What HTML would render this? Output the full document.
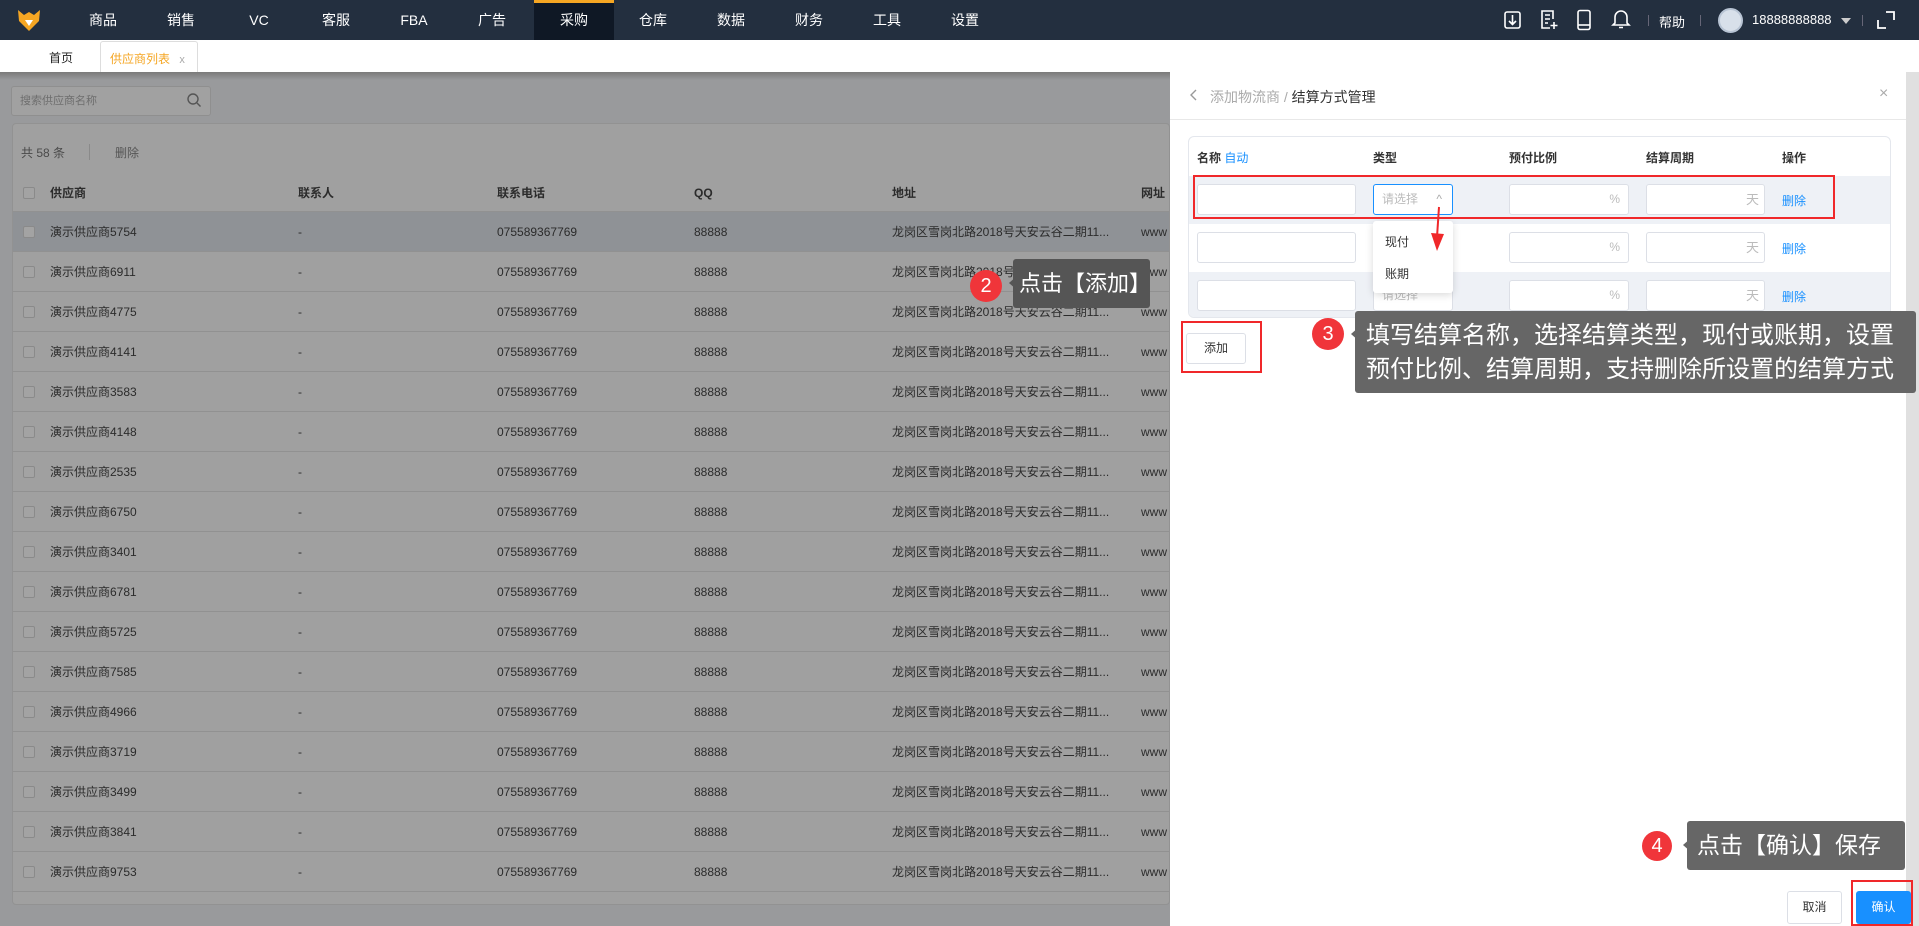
<!DOCTYPE html>
<html><head><meta charset="utf-8"><style>
*{margin:0;padding:0;box-sizing:border-box}
body{width:1919px;height:926px;overflow:hidden;position:relative;font-family:"Liberation Sans","Noto Sans CJK SC",sans-serif;font-size:12px;color:#333;background:#fff}
.a{position:absolute}
.nav{left:0;top:0;width:1919px;height:40px;background:#232f3f}
.ni{position:absolute;top:0;height:40px;line-height:40px;color:#fff;font-size:14px;text-align:center;width:78px}
.ov{left:0;top:72px;width:1170px;height:854px;background:#999a9c}
.card{left:12px;top:123px;width:1158px;height:782px;background:#a0a0a0;border-radius:4px;border:1px solid #929292;overflow:hidden}
.row{position:absolute;left:0;width:1158px;height:40px;border-bottom:1px solid #919191}
.c{position:absolute;top:0;line-height:40px;color:#2b2b2b;font-size:12px;white-space:nowrap}
.cb{position:absolute;left:10px;top:14px;width:12px;height:12px;border:1px solid #8a8a8a;border-radius:2px;background:#a3a3a3}
.drawer{left:1170px;top:72px;width:736px;height:854px;background:#fff}
.inp{position:absolute;height:31px;border:1px solid #dcdfe6;border-radius:3px;background:#fff;color:#bbb;font-size:12px;line-height:29px}
.red{position:absolute;border:2px solid #f0282a}
.tip{position:absolute;background:#666;color:#fff;border-radius:3px;white-space:nowrap}
.badge{position:absolute;border-radius:50%;background:#f0353a;color:#fff;text-align:center}
</style></head><body>
<div class="a nav">
  <svg class="a" style="left:17px;top:8px" width="24" height="24" viewBox="0 0 24 24"><path d="M1 2 L7 7 L12 4 L17 7 L23 2 L22 13 L12 23 L2 13Z" fill="#f5a623"/><path d="M8 12 L16 12 L12 18Z" fill="#fff"/></svg>
  <div class="ni" style="left:64px">商品</div><div class="ni" style="left:142px">销售</div><div class="ni" style="left:220px">VC</div><div class="ni" style="left:297px">客服</div><div class="ni" style="left:375px">FBA</div><div class="ni" style="left:453px">广告</div>
  <div class="ni" style="left:534px;width:80px;background:#0f1825">采购</div><div class="a" style="left:534px;top:0;width:80px;height:3px;background:#f5a623"></div>
  <div class="ni" style="left:614px">仓库</div><div class="ni" style="left:692px">数据</div><div class="ni" style="left:770px">财务</div><div class="ni" style="left:848px">工具</div><div class="ni" style="left:926px">设置</div>
  <svg class="a" style="left:1503px;top:10px" width="20" height="20" viewBox="0 0 20 20" fill="none" stroke="#fff" stroke-width="1.6"><rect x="2" y="2" width="15" height="16" rx="2"/><path d="M9.5 5v9M6 11l3.5 3.5L13 11"/></svg>
  <svg class="a" style="left:1539px;top:9px" width="20" height="22" viewBox="0 0 20 22" fill="none" stroke="#fff" stroke-width="1.6"><path d="M14 10V2H3v17h8M6 6h5M6 10h5M6 14h3M15 13v7M11.5 16.5h7"/></svg>
  <svg class="a" style="left:1576px;top:9px" width="16" height="22" viewBox="0 0 16 22" fill="none" stroke="#fff" stroke-width="1.6"><rect x="2" y="1.5" width="12" height="19" rx="2"/><path d="M2 16h12"/></svg>
  <svg class="a" style="left:1611px;top:8px" width="20" height="22" viewBox="0 0 20 22" fill="none" stroke="#fff" stroke-width="1.6"><path d="M10 3a6 6 0 0 1 6 6v6l2 2H2l2-2V9a6 6 0 0 1 6-6zM8 19.5h4"/></svg>
  <div class="a" style="left:1648px;top:15px;width:1px;height:11px;background:#667"></div>
  <div class="a" style="left:1659px;top:12px;color:#fff;font-size:13px">帮助</div>
  <div class="a" style="left:1700px;top:15px;width:1px;height:11px;background:#667"></div>
  <div class="a" style="left:1718px;top:8px;width:25px;height:25px;border-radius:50%;background:#d8e0ea;border:2px solid #b8c4d4"></div>
  <div class="a" style="left:1752px;top:12px;color:#fff;font-size:13px">18888888888</div>
  <div class="a" style="left:1841px;top:18px;border:5px solid transparent;border-top:6px solid #ccc"></div>
  <div class="a" style="left:1862px;top:15px;width:1px;height:11px;background:#667"></div>
  <svg class="a" style="left:1877px;top:11px" width="18" height="18" viewBox="0 0 18 18" fill="none" stroke="#fff" stroke-width="1.8"><path d="M1 9v8h8M9 1h8v8"/></svg>
</div>
<div class="a" style="left:0;top:40px;width:1919px;height:32px;background:#fff"></div>
<div class="a" style="left:49px;top:49px;font-size:12px;color:#222">首页</div>
<div class="a" style="left:100px;top:41px;width:98px;height:31px;border:1px solid #ddd;border-bottom:none;border-radius:3px 3px 0 0"></div>
<div class="a" style="left:110px;top:50px;font-size:12px;color:#f5a623">供应商列表 <span style="color:#aaa;margin-left:6px;font-size:11px">x</span></div>

<div class="a ov"></div>
<div class="a" style="left:0;top:72px;width:1170px;height:8px;background:linear-gradient(#7a7a7a,#999a9c)"></div>
<div class="a" style="left:11px;top:86px;width:200px;height:30px;border:1px solid #8f8f8f;border-radius:3px;background:#a1a1a1;color:#6e6e6e;font-size:11px;line-height:28px;padding-left:8px">搜索供应商名称</div>
<svg class="a" style="left:186px;top:92px" width="16" height="16" viewBox="0 0 16 16" fill="none" stroke="#555" stroke-width="1.4"><circle cx="7" cy="7" r="5"/><path d="M11 11l3.5 3.5"/></svg>
<div class="a card">
  <div class="a" style="left:8px;top:20px;color:#4a4a4a;font-size:12px">共 58 条</div>
  <div class="a" style="left:76px;top:20px;width:1px;height:16px;background:#8a8a8a"></div>
  <div class="a" style="left:102px;top:20px;color:#555">删除</div>
  <div class="row" style="top:50px;height:38px;background:#a0a0a0"><div class="cb" style="top:13px"></div><div class="c" style="left:37px;font-weight:bold;line-height:38px">供应商</div><div class="c" style="left:285px;font-weight:bold;line-height:38px">联系人</div><div class="c" style="left:484px;font-weight:bold;line-height:38px">联系电话</div><div class="c" style="left:681px;font-weight:bold;line-height:38px">QQ</div><div class="c" style="left:879px;font-weight:bold;line-height:38px">地址</div><div class="c" style="left:1128px;font-weight:bold;line-height:38px">网址</div></div>
  <div id="rows"></div>
</div>
<script>
var ids=[5754,6911,4775,4141,3583,4148,2535,6750,3401,6781,5725,7585,4966,3719,3499,3841,9753];var h='';
ids.forEach(function(n,i){var t=88+i*40;h+='<div class="row" style="top:'+t+'px;'+(i==0?'background:#8f9296':'')+'"><div class="cb"></div><div class="c" style="left:37px">演示供应商'+n+'</div><div class="c" style="left:285px">-</div><div class="c" style="left:484px">075589367769</div><div class="c" style="left:681px">88888</div><div class="c" style="left:879px">龙岗区雪岗北路2018号天安云谷二期11...</div><div class="c" style="left:1128px">www</div></div>'});
document.getElementById('rows').innerHTML=h;
</script>

<div class="a drawer">
  <svg class="a" style="left:19px;top:17px" width="10" height="12" viewBox="0 0 10 12" fill="none" stroke="#999" stroke-width="1.4"><path d="M7 1L2 6l5 5"/></svg>
  <div class="a" style="left:40px;top:15px;font-size:14px;color:#aaa">添加物流商 / <span style="color:#333">结算方式管理</span></div>
  <div class="a" style="left:709px;top:13px;font-size:16px;color:#aaa">×</div>
  <div class="a" style="left:0;top:47px;width:736px;height:1px;background:#e8e8e8"></div>
  <div class="a" style="left:18px;top:64px;width:703px;height:182px;border:1px solid #e4e7ed;border-radius:6px;overflow:hidden">
    <div class="a" style="left:8px;top:12px;font-weight:bold;font-size:12px">名称 <span style="color:#1890ff;font-weight:normal">自动</span></div>
    <div class="a" style="left:184px;top:12px;font-weight:bold">类型</div>
    <div class="a" style="left:320px;top:12px;font-weight:bold">预付比例</div>
    <div class="a" style="left:457px;top:12px;font-weight:bold">结算周期</div>
    <div class="a" style="left:593px;top:12px;font-weight:bold">操作</div>
    <div class="a" style="left:0;top:39px;width:703px;height:48px;background:#eef1f6"></div>
    <div class="a" style="left:0;top:135px;width:703px;height:48px;background:#eef1f6"></div>
  </div>
</div>
<div class="a" style="left:1906px;top:72px;width:13px;height:854px;background:#e0e0e0"></div>
<div class="inp" style="left:1197px;top:184px;width:159px"></div>
<div class="inp" style="left:1373px;top:184px;width:80px;border-color:#1890ff;padding-left:8px">请选择 <span style="position:absolute;right:10px;color:#aaa">^</span></div>
<div class="inp" style="left:1509px;top:184px;width:120px;text-align:right;padding-right:8px">%</div>
<div class="inp" style="left:1646px;top:184px;width:119px;text-align:right;padding-right:5px;font-size:13px">天</div>
<div class="a" style="left:1782px;top:192px;color:#1890ff">删除</div>
<div class="inp" style="left:1197px;top:232px;width:159px"></div>
<div class="inp" style="left:1509px;top:232px;width:120px;text-align:right;padding-right:8px">%</div>
<div class="inp" style="left:1646px;top:232px;width:119px;text-align:right;padding-right:5px;font-size:13px">天</div>
<div class="a" style="left:1782px;top:240px;color:#1890ff">删除</div>
<div class="inp" style="left:1197px;top:280px;width:159px"></div>
<div class="inp" style="left:1373px;top:280px;width:80px;padding-left:8px">请选择</div>
<div class="inp" style="left:1509px;top:280px;width:120px;text-align:right;padding-right:8px">%</div>
<div class="inp" style="left:1646px;top:280px;width:119px;text-align:right;padding-right:5px;font-size:13px">天</div>
<div class="a" style="left:1782px;top:288px;color:#1890ff">删除</div>
<div class="a" style="left:1373px;top:221px;width:80px;height:72px;background:#fff;border-radius:3px;box-shadow:0 2px 8px rgba(0,0,0,.15)"></div>
<div class="a" style="left:1385px;top:233px;color:#333">现付</div>
<div class="a" style="left:1385px;top:265px;color:#333">账期</div>
<svg class="a" style="left:1428px;top:205px" width="20" height="50" viewBox="0 0 20 50"><path d="M11 2 L9 32" stroke="#f0282a" stroke-width="2"/><path d="M3 28 L9 46 L16 29Z" fill="#f0282a"/></svg>
<div class="red" style="left:1193px;top:175px;width:642px;height:44px"></div>
<div class="a" style="left:1186px;top:333px;width:60px;height:31px;border:1px solid #dcdfe6;border-radius:3px;text-align:center;line-height:29px">添加</div>
<div class="red" style="left:1181px;top:321px;width:81px;height:52px"></div>
<div class="tip" style="left:1355px;top:311px;width:561px;height:82px;font-size:24px;line-height:34px;padding:8px 0 0 11px">填写结算名称，选择结算类型，现付或账期，设置<br>预付比例、结算周期，支持删除所设置的结算方式</div>
<div class="a" style="left:1344px;top:327px;border:7px solid transparent;border-right:8px solid #666"></div>
<div class="badge" style="left:1312px;top:318px;width:32px;height:32px;line-height:32px;font-size:20px">3</div>
<div class="tip" style="left:1013px;top:259px;width:137px;height:49px;font-size:22px;line-height:49px;padding-left:6px;background:#555">点击【添加】</div>
<div class="a" style="left:1002px;top:276px;border:7px solid transparent;border-right:8px solid #555"></div>
<div class="badge" style="left:970px;top:270px;width:32px;height:32px;line-height:32px;font-size:20px">2</div>
<div class="tip" style="left:1687px;top:821px;width:218px;height:49px;font-size:23px;line-height:49px;padding-left:10px">点击【确认】保存</div>
<div class="a" style="left:1676px;top:838px;border:7px solid transparent;border-right:8px solid #666"></div>
<div class="badge" style="left:1642px;top:831px;width:30px;height:30px;line-height:30px;font-size:20px">4</div>
<div class="a" style="left:1787px;top:891px;width:55px;height:33px;border:1px solid #dcdfe6;border-radius:3px;text-align:center;line-height:31px">取消</div>
<div class="a" style="left:1856px;top:891px;width:55px;height:33px;background:#1890ff;border-radius:3px;color:#fff;text-align:center;line-height:33px">确认</div>
<div class="red" style="left:1851px;top:880px;width:62px;height:46px"></div>
</body></html>
